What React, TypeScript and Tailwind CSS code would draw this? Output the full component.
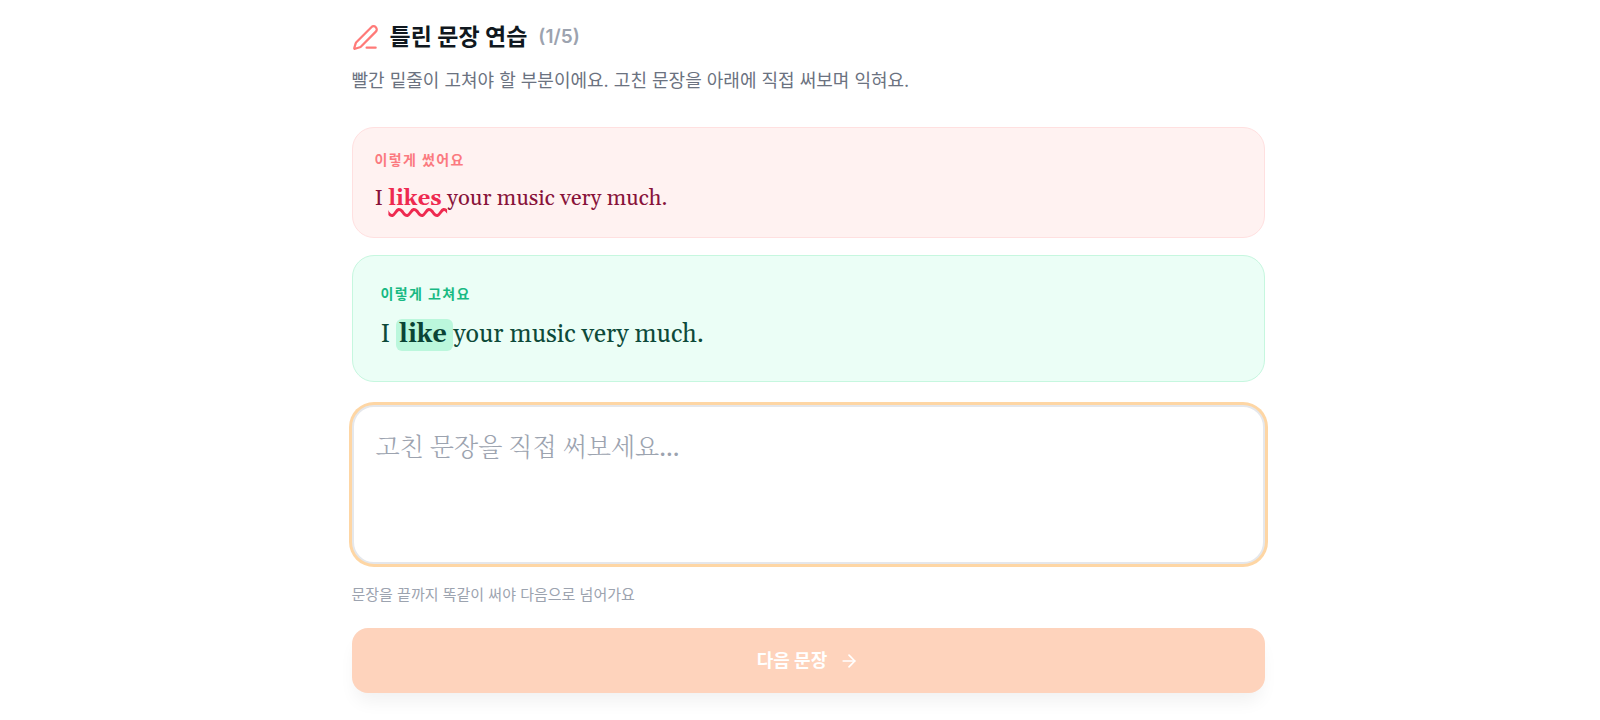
import { ArrowRight, PenLine } from "lucide-react";

const serif = "font-['Georgia','Gelasio','Liberation_Serif','Noto_Serif_CJK_KR','Noto_Sans_CJK_KR',serif]";

export default function App() {
  return (
    <main className="min-h-screen bg-white pt-[21px] pb-7 pl-4 font-['Inter','Noto_Sans_CJK_KR',sans-serif]">
      <div className="mx-auto flex w-full max-w-[913px] flex-col">
        <header>
          <div className="flex items-center gap-[11px]">
            <PenLine className="size-[27px] text-[#ff7a78]" strokeWidth={2} aria-hidden="true" />
            <h1 className="text-[23px] leading-8 font-bold text-[#101820]">틀린 문장 연습</h1>
            <span className="text-[19px] leading-8 font-semibold text-[#9ca3af]">(1/5)</span>
          </div>
          <p className="mt-3 text-[18px] leading-8 text-[#6b7280]">
            빨간 밑줄이 고쳐야 할 부분이에요. 고친 문장을 아래에 직접 써보며 익혀요.
          </p>
        </header>

        <section className="mt-[30px] rounded-[22px] border border-[#ffe0e0] bg-[#fff2f1] px-[22px] pt-[22px] pb-[22px]">
          <h2 className="text-[14px] leading-5 font-bold tracking-widest text-[#fb7a80]">이렇게 썼어요</h2>
          <p className={`${serif} mt-[13px] text-[22px] leading-8 text-[#88133a]`}>
            I{" "}
            <span className="font-bold whitespace-pre text-[#ee2a50] underline decoration-wavy decoration-[3px] underline-offset-3">
              {"likes "}
            </span>
            your music very much.
          </p>
        </section>

        <section className="mt-[17px] rounded-[22px] border border-[#c6f7df] bg-[#ebfef6] px-7 pt-7 pb-[28px]">
          <h2 className="text-[14px] leading-5 font-bold tracking-widest text-[#18b983]">이렇게 고쳐요</h2>
          <p className={`${serif} mt-[13px] text-[25px] leading-9 text-[#0e4a3a]`}>
            I{" "}
            <mark className="rounded-md bg-[#bbf7dc] pl-[3px] font-bold whitespace-pre text-[#0a4435]">{"like "}</mark>
            your music very much.
          </p>
        </section>

        <textarea
          aria-label="고친 문장"
          placeholder="고친 문장을 직접 써보세요..."
          className={`${serif} mt-[23px] block h-[159px] w-full resize-none rounded-[22px] border-2 border-[#e5e7eb] bg-white px-[22px] py-6 text-[25px] leading-9 text-[#1f2937] ring-3 ring-[#fed6a4] outline-none placeholder:font-light placeholder:text-[#9ca3af]`}
        />

        <p className="mt-[17px] text-[15px] leading-7 text-[#9ca3af]">문장을 끝까지 똑같이 써야 다음으로 넘어가요</p>

        <button
          type="button"
          className="mt-[19px] flex h-[65px] w-full items-center justify-center gap-3 rounded-2xl bg-[#fed3bc] text-[18px] font-bold text-white shadow-[0_12px_18px_-4px_rgba(0,0,0,0.06)]"
        >
          다음 문장
          <ArrowRight className="size-5" strokeWidth={2} aria-hidden="true" />
        </button>
      </div>
    </main>
  );
}
